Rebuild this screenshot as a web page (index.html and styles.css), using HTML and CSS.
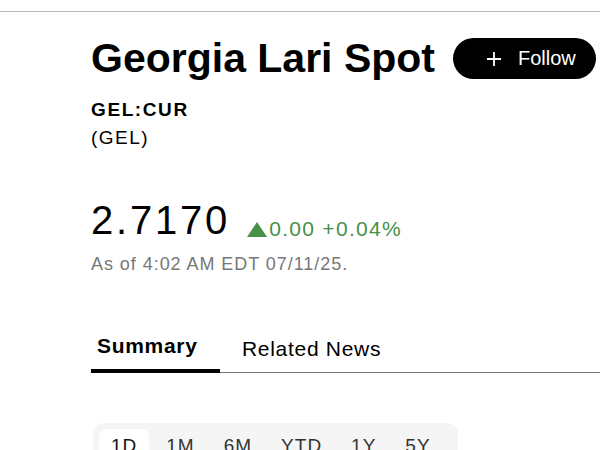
FILE: index.html
```html
<!DOCTYPE html>
<html lang="en">
<head>
<meta charset="utf-8">
<title>Georgia Lari Spot</title>
<link rel="stylesheet" href="styles.css">
</head>
<body>
<div class="topbar"></div>
<main class="main">
  <div class="title-row">
    <h1 class="title">Georgia Lari Spot</h1>
    <button class="follow">
      <svg class="plus" width="14" height="14" viewBox="0 0 14 14"><path d="M7 0V14M0 7H14" stroke="#fff" stroke-width="1.8" fill="none"/></svg>
      <span>Follow</span>
    </button>
  </div>
  <div class="ticker">GEL:CUR</div>
  <div class="code">(GEL)</div>
  <div class="price-row"><span class="price">2.7170</span><span class="change"><svg class="tri" width="20" height="15" viewBox="0 0 20 15"><path d="M10 0L20 15H0Z" fill="#469146"/></svg>0.00 +0.04%</span></div>
  <div class="asof">As of 4:02 AM EDT 07/11/25.</div>
  <nav class="tabs">
    <div class="tab active">Summary</div>
    <div class="tab">Related News</div>
  </nav>
  <div class="ranges">
    <div class="range selected">1D</div>
    <div class="range">1M</div>
    <div class="range">6M</div>
    <div class="range">YTD</div>
    <div class="range">1Y</div>
    <div class="range">5Y</div>
  </div>
</main>
</body>
</html>
```
FILE: styles.css
```css
* { box-sizing: border-box; }
body {
  margin: 0;
  font-family: "Liberation Sans", Arial, sans-serif;
  color: #000;
  background: #fff;
  overflow: hidden;
}
.topbar {
  height: 12px;
  border-bottom: 1px solid #b5b5b5;
}
.main {
  padding-left: 91px;
}
.title-row {
  display: flex;
  align-items: center;
  gap: 18px;
  margin-top: 26px;
}
.title {
  margin: 0;
  font-size: 41px;
  line-height: 41px;
  font-weight: 700;
}
.follow {
  display: flex;
  align-items: center;
  width: 143px;
  height: 41px;
  padding: 0 0 0 34px;
  gap: 17px;
  border: none;
  border-radius: 21px;
  background: #000;
  color: #fff;
  font-family: inherit;
  font-size: 20px;
}
.plus { display: block; }
.ticker {
  margin-top: 17px;
  font-size: 19px;
  line-height: 28px;
  font-weight: 700;
  letter-spacing: 1.6px;
}
.code {
  font-size: 19px;
  line-height: 28px;
  letter-spacing: 1.5px;
}
.price-row {
  margin-top: 46px;
  height: 44px;
  line-height: 44px;
  white-space: nowrap;
}
.price {
  font-size: 40px;
  letter-spacing: 2.8px;
}
.change {
  margin-left: 17px;
  font-size: 21px;
  color: #469146;
  letter-spacing: 1.3px;
  vertical-align: -2px;
}
.tri {
  margin-right: 2px;
  vertical-align: -1px;
}
.asof {
  margin-top: 11px;
  font-size: 18px;
  line-height: 22px;
  color: #777;
  letter-spacing: 0.95px;
}
.tabs {
  display: flex;
  align-items: flex-end;
  margin-top: 59px;
  border-bottom: 1px solid #777;
}
.tab {
  font-size: 21px;
  line-height: 24px;
  padding: 0 0 11px 22px;
  letter-spacing: 0.7px;
}
.tab.active {
  width: 129px;
  padding-left: 6px;
  font-weight: 700;
  border-bottom: 4px solid #000;
  margin-bottom: -1px;
}
.ranges {
  display: flex;
  gap: 5px;
  width: 365px;
  margin-top: 50px;
  margin-left: 2px;
  padding: 6px;
  height: 60px;
  background: #f5f5f5;
  border-radius: 10px;
}
.range {
  padding: 5px 12px;
  font-size: 19px;
  line-height: 24px;
  letter-spacing: 1px;
  color: #333;
  height: 40px;
  border-radius: 8px;
}
.range.selected {
  background: #fff;
  color: #111;
}
```
